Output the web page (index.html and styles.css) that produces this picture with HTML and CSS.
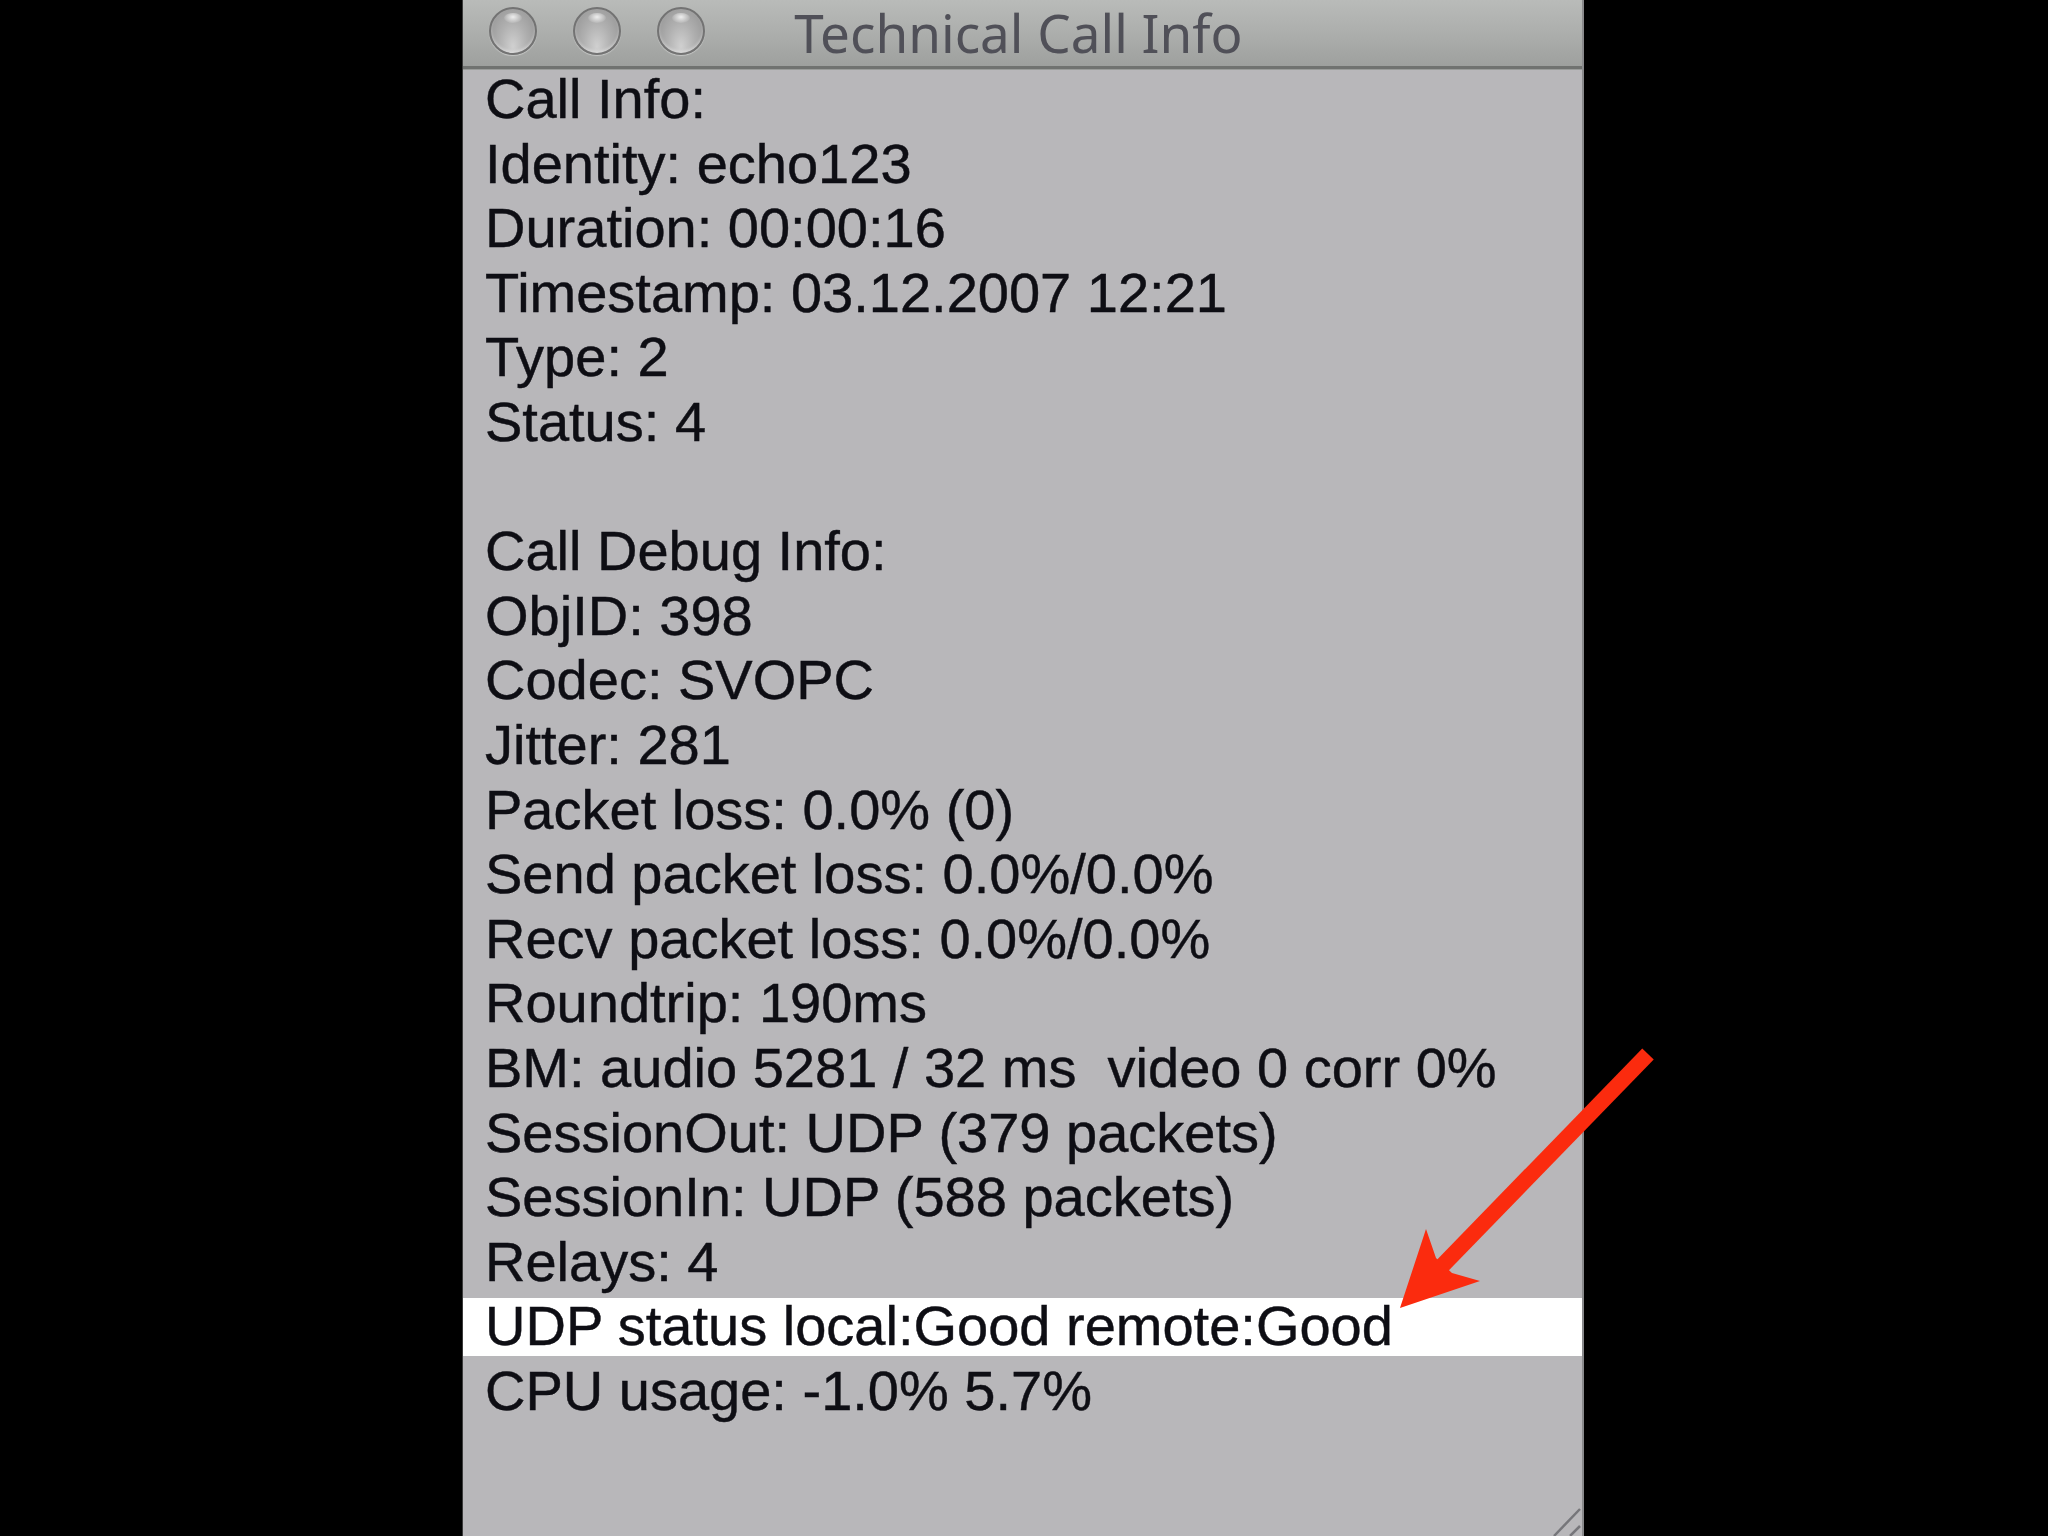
FILE: index.html
```html
<!DOCTYPE html>
<html>
<head>
<meta charset="utf-8">
<title>Technical Call Info</title>
<link rel="stylesheet" href="styles.css">
</head>
<body>
<div class="screen">
  <div class="window">
    <div class="titlebar">
      <div class="lights">
        <span class="light"></span>
        <span class="light"></span>
        <span class="light"></span>
      </div>
      <div class="title">Technical Call Info</div>
      <div class="spacer"></div>
    </div>
    <div class="content">
      <div class="line">Call Info:</div>
      <div class="line">Identity: echo123</div>
      <div class="line">Duration: 00:00:16</div>
      <div class="line">Timestamp: 03.12.2007 12:21</div>
      <div class="line">Type: 2</div>
      <div class="line">Status: 4</div>
      <div class="line"> </div>
      <div class="line">Call Debug Info:</div>
      <div class="line">ObjID: 398</div>
      <div class="line">Codec: SVOPC</div>
      <div class="line">Jitter: 281</div>
      <div class="line">Packet loss: 0.0% (0)</div>
      <div class="line">Send packet loss: 0.0%/0.0%</div>
      <div class="line">Recv packet loss: 0.0%/0.0%</div>
      <div class="line">Roundtrip: 190ms</div>
      <div class="line">BM: audio 5281 / 32 ms  video 0 corr 0%</div>
      <div class="line">SessionOut: UDP (379 packets)</div>
      <div class="line">SessionIn: UDP (588 packets)</div>
      <div class="line">Relays: 4</div>
      <div class="line highlight">UDP status local:Good remote:Good</div>
      <div class="line">CPU usage: -1.0% 5.7%</div>
    </div>
    <div class="footer">
      <svg class="grip" viewBox="0 0 32 32" width="32" height="32">
        <line x1="4" y1="32" x2="30" y2="5" />
        <line x1="20" y1="32" x2="30" y2="22" />
      </svg>
    </div>
  </div>
</div>
<svg class="annotation" viewBox="0 0 2048 1536" width="2048" height="1536">
  <line class="shaft" x1="1648" y1="1054" x2="1442" y2="1266" />
  <polygon class="head" points="1400,1308 1426,1229 1436,1258 1452,1273 1480,1281" />
</svg>
</body>
</html>
```
FILE: styles.css
```css
html, body {
  margin: 0;
  padding: 0;
  background: #000;
  width: 2048px;
  height: 1536px;
  overflow: hidden;
}

.screen {
  width: 2048px;
  height: 1536px;
  display: flex;
  padding-left: 462px;
  box-sizing: border-box;
}

.window {
  width: 1122px;
  height: 1536px;
  display: flex;
  flex-direction: column;
  background: #b8b7ba;
  border-left: 1px solid #3a3a3a;
  border-right: 2px solid #8a8a8c;
  box-sizing: border-box;
}

.titlebar {
  height: 69px;
  box-sizing: border-box;
  display: grid;
  grid-template-columns: 1fr auto 1fr;
  align-items: start;
  background: linear-gradient(to bottom, #b9bbb9 0%, #abadab 55%, #9ea09e 100%);
  border-bottom: 3px solid #707270;
  box-shadow: 0 1px 0 #9a9c9a;
}

.lights {
  display: flex;
  gap: 36px;
  padding-left: 26px;
  padding-top: 7px;
}

.light {
  position: relative;
  width: 48px;
  height: 48px;
  box-sizing: border-box;
  border-radius: 50%;
  border: 2px solid #737373;
  background: radial-gradient(ellipse at 50% 85%, #d0d0d0 0%, #b0b0b0 45%, #909090 100%);
  box-shadow: inset 0 -2px 3px rgba(255,255,255,0.35), 0 1px 1px rgba(255,255,255,0.4);
}

.light::after {
  content: "";
  position: absolute;
  left: 13px;
  top: 4px;
  width: 18px;
  height: 10px;
  border-radius: 50%;
  background: radial-gradient(ellipse at 50% 40%, rgba(255,255,255,0.8), rgba(255,255,255,0) 80%);
}

.title {
  font-family: "Noto Sans", "DejaVu Sans", sans-serif;
  font-size: 53px;
  line-height: 66px;
  height: 66px;
  color: #505058;
  white-space: nowrap;
  padding-right: 8px;
}

.content {
  flex: 1;
  margin-top: -2px;
  padding-left: 22px;
  font-family: "Liberation Sans", Arial, sans-serif;
  font-size: 56px;
  color: #0e0e14;
  -webkit-text-stroke: 0.45px #0e0e14;
}

.line {
  height: 64.6px;
  line-height: 64.6px;
  white-space: pre;
}

.highlight {
  margin-left: -22px;
  padding-left: 22px;
  background: linear-gradient(to bottom,
    transparent 0, transparent 4px,
    #ffffff 4px, #ffffff calc(100% - 3px),
    transparent calc(100% - 3px));
}

.footer {
  display: flex;
  justify-content: flex-end;
  height: 32px;
}

.grip line {
  stroke: #76767a;
  stroke-width: 2.5;
}

.annotation {
  position: absolute;
  left: 0;
  top: 0;
  pointer-events: none;
}

.shaft {
  stroke: #fb2b0e;
  stroke-width: 16;
}

.head {
  fill: #fb2b0e;
}
```
